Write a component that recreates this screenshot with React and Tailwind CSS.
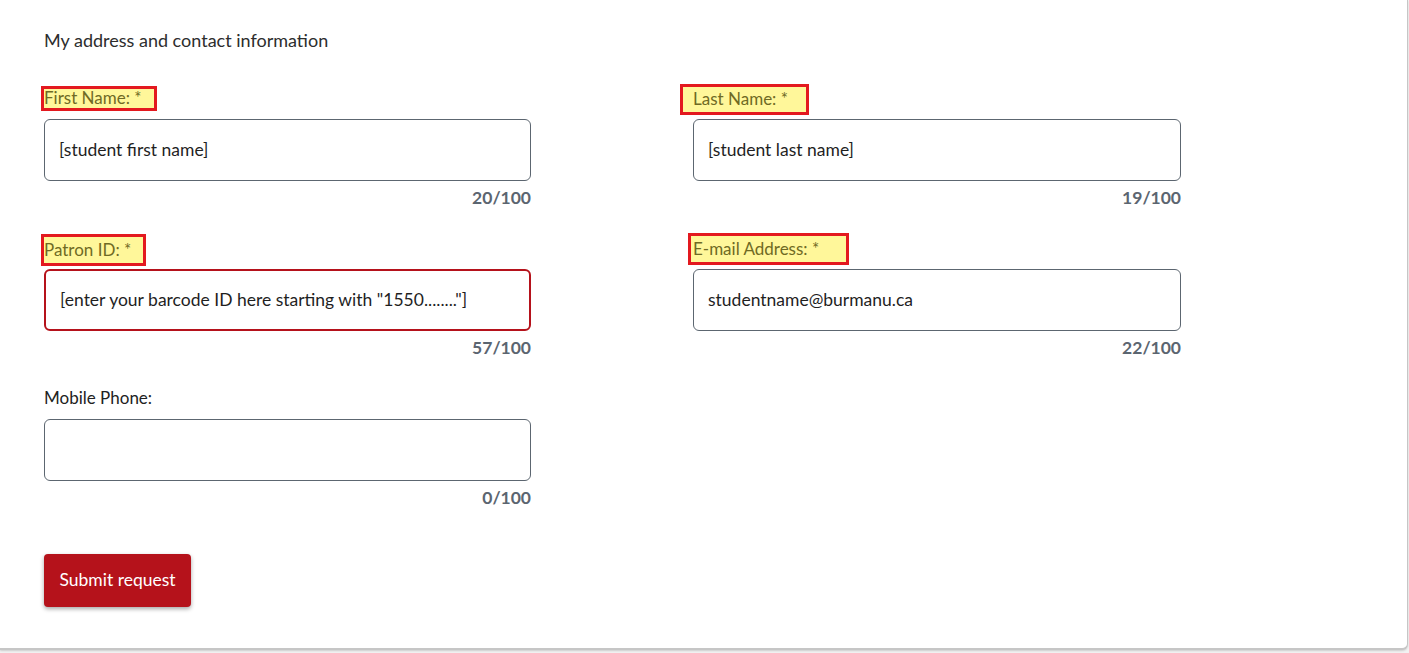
import React from 'react';

const fields = [
  { label: 'First Name: *', value: '[student first name]', count: '20/100', box: '-ml-[3px] pl-0 pr-[12px] h-[25px]', error: false },
  { label: 'Last Name: *', value: '[student last name]', count: '19/100', box: '-ml-[13px] pl-[10px] pr-[18px] h-[31px] mt-[2px]', error: false },
  { label: 'Patron ID: *', value: '[enter your barcode ID here starting with "1550........"]', count: '57/100', box: '-ml-[3px] pl-0 pr-[12px] h-[32px] mt-[4px]', error: true },
  { label: 'E-mail Address: *', value: 'studentname@burmanu.ca', count: '22/100', box: '-ml-[5px] pl-[2px] pr-[27px] h-[32px] mt-[2px]', error: false },
  { label: 'Mobile Phone:', value: '', count: '0/100', box: null, error: false },
];

const Field = ({ field }) => (
  <div className="flex flex-col">
    <div className="h-[24px] flex items-center text-[17px]">
      {field.box ? (
        <span className={`inline-flex items-center shrink-0 bg-[#fff79a] border-[3px] border-[#e3191f] text-[#6f6a24] ${field.box}`}>
          {field.label}
        </span>
      ) : (
        <span className="text-[#222]">{field.label}</span>
      )}
    </div>
    <div
      className={`mt-[9px] h-[62px] rounded-[6px] bg-white flex items-center text-[17.5px] text-[#1f1f1f] ${
        field.error ? 'border-2 border-[#b5121b] pl-[14px]' : 'border border-[#5c6670] pl-[14px]'
      }`}
    >
      {field.value}
    </div>
    <div className="mt-[5px] h-[24px] flex items-center justify-end font-bold text-[#5b6570] text-[17.5px]">
      {field.count}
    </div>
  </div>
);

export default function App() {
  return (
    <div className="w-[1409px] h-[653px] bg-[#f2f2f2] overflow-hidden" style={{ fontFamily: 'Lato, "Open Sans", sans-serif' }}>
      <div className="w-[1408px] h-[650px] bg-white border-r border-b-[2px] border-[#c6c6c6] rounded-br-[6px] shadow-[0_1px_2px_rgba(0,0,0,0.15)] pl-[44px] pt-[28px] text-[16px]">
        <div className="h-[24px] flex items-center text-[18px] text-[#2d2d2d]">My address and contact information</div>
        <div className="mt-[34px] grid grid-cols-[487px_488px] gap-x-[162px] gap-y-[26px]">
          {fields.map((f) => (
            <Field key={f.label} field={f} />
          ))}
        </div>
        <button
          type="button"
          className="mt-[44px] h-[53px] w-[147px] rounded-[4px] bg-[#b5121b] text-white text-[17.5px] shadow-[0_2px_4px_rgba(0,0,0,0.35)]"
        >
          Submit request
        </button>
      </div>
    </div>
  );
}
